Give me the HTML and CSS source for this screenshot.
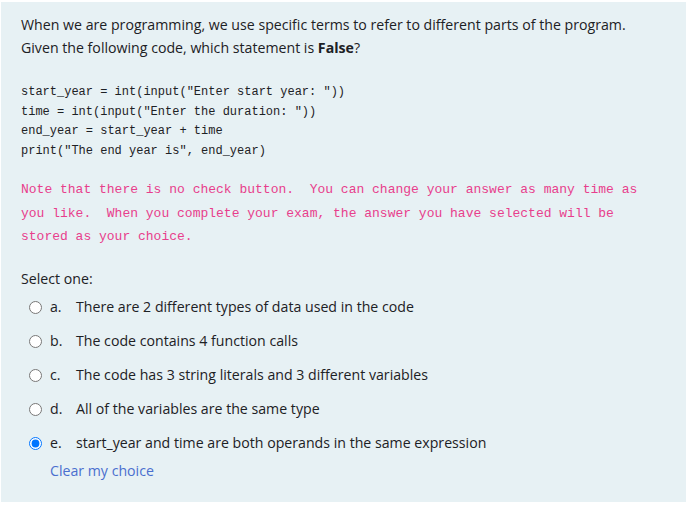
FILE: index.html
```html
<!DOCTYPE html>
<html>
<head>
<meta charset="utf-8">
<link rel="stylesheet" href="styles.css">
</head>
<body>
<div class="formulation">
  <div class="qtext">
    <p class="intro">When we are programming, we use specific terms to refer to different parts of the program.<br>Given the following code, which statement is <strong>False</strong>?</p>
    <pre class="code">start_year = int(input("Enter start year: "))
time = int(input("Enter the duration: "))
end_year = start_year + time
print("The end year is", end_year)</pre>
    <pre class="note">Note that there is no check button.  You can change your answer as many time as
you like.  When you complete your exam, the answer you have selected will be
stored as your choice.</pre>
  </div>
  <div class="ablock">
    <div class="prompt">Select one:</div>
    <div class="answer">
      <div class="opt"><input type="radio" name="q1" id="o1"><label for="o1"><span class="num">a.</span><span>There are 2 different types of data used in the code</span></label></div>
      <div class="opt"><input type="radio" name="q1" id="o2"><label for="o2"><span class="num">b.</span><span>The code contains 4 function calls</span></label></div>
      <div class="opt"><input type="radio" name="q1" id="o3"><label for="o3"><span class="num">c.</span><span>The code has 3 string literals and 3 different variables</span></label></div>
      <div class="opt"><input type="radio" name="q1" id="o4"><label for="o4"><span class="num">d.</span><span>All of the variables are the same type</span></label></div>
      <div class="opt"><input type="radio" name="q1" id="o5" checked><label for="o5"><span class="num">e.</span><span>start_year and time are both operands in the same expression</span></label></div>
    </div>
    <div class="clear"><a href="#">Clear my choice</a></div>
  </div>
</div>
</body>
</html>
```
FILE: styles.css
```css
html, body {
  margin: 0;
  padding: 0;
  background: #ffffff;
}
body {
  font-family: "Open Sans", "Noto Sans", sans-serif;
  font-size: 14.16px;
  line-height: 22.5px;
  color: #1d2125;
}
.formulation {
  margin: 2px 2px 0 1px;
  width: 645px;
  padding: 12px 20px 19px 20px;
  background: #e7f1f4;
}
.intro {
  margin: 0;
}
.intro strong {
  font-weight: 700;
}
.code {
  margin: 24px 0 0 0;
  font-family: "Liberation Mono", monospace;
  font-size: 12px;
  line-height: 19.5px;
  color: #1d2125;
}
.note {
  margin: 17px 0 0 0;
  font-family: "Liberation Mono", monospace;
  font-size: 13px;
  line-height: 23.5px;
  color: #e83e8c;
}
.prompt {
  margin-top: 19px;
}
.answer {
  display: flex;
  flex-direction: column;
}
.opt {
  display: flex;
  align-items: center;
  height: 34px;
}
.opt input {
  margin: 0 0 0 8px;
  width: 13px;
  height: 13px;
}
.opt label {
  display: flex;
  margin-left: 8px;
}
.num {
  width: 26px;
}
.clear {
  padding-left: 29px;
}
.clear a {
  color: #4a6fcf;
  text-decoration: none;
}
```
